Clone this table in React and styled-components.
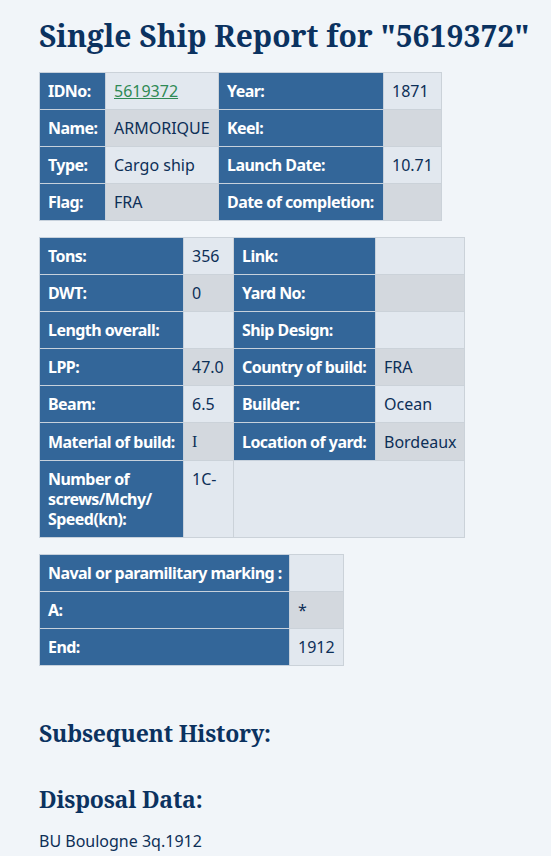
import React from 'react';
import styled, { createGlobalStyle } from 'styled-components';

const GlobalStyle = createGlobalStyle`
    html, body {
        margin: 0;
        padding: 0;
        background: #f1f5f9;
    }
    body {
        font-family: "Noto Sans", "Open Sans", sans-serif;
        color: #0d2f57;
    }
`;

const Page = styled.main`
    padding: 14px 38px 20px 39px;
`;

const Title = styled.h1`
    margin: 0 0 14px 0;
    font-family: "Noto Serif", "DejaVu Serif", serif;
    font-size: 30px;
    font-weight: 700;
    line-height: 44px;
    color: #0b3260;
    white-space: nowrap;
`;

const SectionTitle = styled.h2`
    margin: ${(p) => p.$top}px 0 0 0;
    font-family: "Noto Serif", "DejaVu Serif", serif;
    font-size: 23px;
    font-weight: 700;
    letter-spacing: -0.2px;
    line-height: 34px;
    color: #0b3260;
`;

const Para = styled.p`
    margin: 14px 0 0 0;
    font-size: 16px;
    line-height: 22px;
`;

const Table = styled.table`
    border-collapse: collapse;
    table-layout: fixed;
    margin-bottom: 16px;
    font-size: 16px;
    line-height: 20px;
`;

const Label = styled.th`
    background: #336699;
    color: #ffffff;
    font-weight: 700;
    letter-spacing: -0.55px;
    text-align: left;
    padding: 8px;
    border: 1px solid #c7d1dc;
    vertical-align: ${(p) => (p.$top ? 'top' : 'middle')};
    white-space: ${(p) => (p.$top ? 'normal' : 'nowrap')};
    height: 20px;
`;

const Value = styled.td`
    background: ${(p) => (p.$dark ? '#d3d8de' : '#e2e8ef')};
    color: #0d2f57;
    padding: 8px;
    border: 1px solid #cbd2d9;
    vertical-align: ${(p) => (p.$top ? 'top' : 'middle')};
    white-space: nowrap;
    height: 20px;
`;

const IdLink = styled.a`
    color: #2f8a55;
    text-decoration: underline;
`;

const SerifChar = styled.span`
    font-family: "Liberation Serif", serif;
`;

const Cols = ({ widths }) => (
    <colgroup>
        {widths.map((w, i) => (
            <col key={i} style={{ width: w }} />
        ))}
    </colgroup>
);

const App = () => {
  return (
    <Page>
        <GlobalStyle />
        <Title>Single Ship Report for "5619372"</Title>

        <Table style={{ width: 402 }}>
            <Cols widths={[66, 113, 165, 58]} />
            <tbody>
                <tr>
                    <Label>IDNo:</Label>
                    <Value><IdLink href="#">5619372</IdLink></Value>
                    <Label>Year:</Label>
                    <Value>1871</Value>
                </tr>
                <tr>
                    <Label>Name:</Label>
                    <Value $dark>ARMORIQUE</Value>
                    <Label>Keel:</Label>
                    <Value $dark></Value>
                </tr>
                <tr>
                    <Label>Type:</Label>
                    <Value>Cargo ship</Value>
                    <Label>Launch Date:</Label>
                    <Value>10.71</Value>
                </tr>
                <tr>
                    <Label>Flag:</Label>
                    <Value $dark>FRA</Value>
                    <Label>Date of completion:</Label>
                    <Value $dark></Value>
                </tr>
            </tbody>
        </Table>

        <Table style={{ width: 425 }}>
            <Cols widths={[144, 50, 142, 89]} />
            <tbody>
                <tr>
                    <Label>Tons:</Label>
                    <Value>356</Value>
                    <Label>Link:</Label>
                    <Value></Value>
                </tr>
                <tr>
                    <Label>DWT:</Label>
                    <Value $dark>0</Value>
                    <Label>Yard No:</Label>
                    <Value $dark></Value>
                </tr>
                <tr>
                    <Label>Length overall:</Label>
                    <Value></Value>
                    <Label>Ship Design:</Label>
                    <Value></Value>
                </tr>
                <tr>
                    <Label>LPP:</Label>
                    <Value $dark>47.0</Value>
                    <Label>Country of build:</Label>
                    <Value $dark>FRA</Value>
                </tr>
                <tr>
                    <Label>Beam:</Label>
                    <Value>6.5</Value>
                    <Label>Builder:</Label>
                    <Value>Ocean</Value>
                </tr>
                <tr>
                    <Label>Material of build:</Label>
                    <Value $dark><SerifChar>I</SerifChar></Value>
                    <Label>Location of yard:</Label>
                    <Value $dark>Bordeaux</Value>
                </tr>
                <tr>
                    <Label $top>Number of screws/Mchy/ Speed(kn):</Label>
                    <Value $top>1C-</Value>
                    <Value colSpan={2}></Value>
                </tr>
            </tbody>
        </Table>

        <Table style={{ width: 304 }}>
            <Cols widths={[250, 54]} />
            <tbody>
                <tr>
                    <Label>Naval or paramilitary marking :</Label>
                    <Value></Value>
                </tr>
                <tr>
                    <Label>A:</Label>
                    <Value $dark>*</Value>
                </tr>
                <tr>
                    <Label>End:</Label>
                    <Value>1912</Value>
                </tr>
            </tbody>
        </Table>

        <SectionTitle $top={50}>Subsequent History:</SectionTitle>
        <SectionTitle $top={32}>Disposal Data:</SectionTitle>
        <Para>BU Boulogne 3q.1912</Para>
    </Page>
  )
}

export default App
